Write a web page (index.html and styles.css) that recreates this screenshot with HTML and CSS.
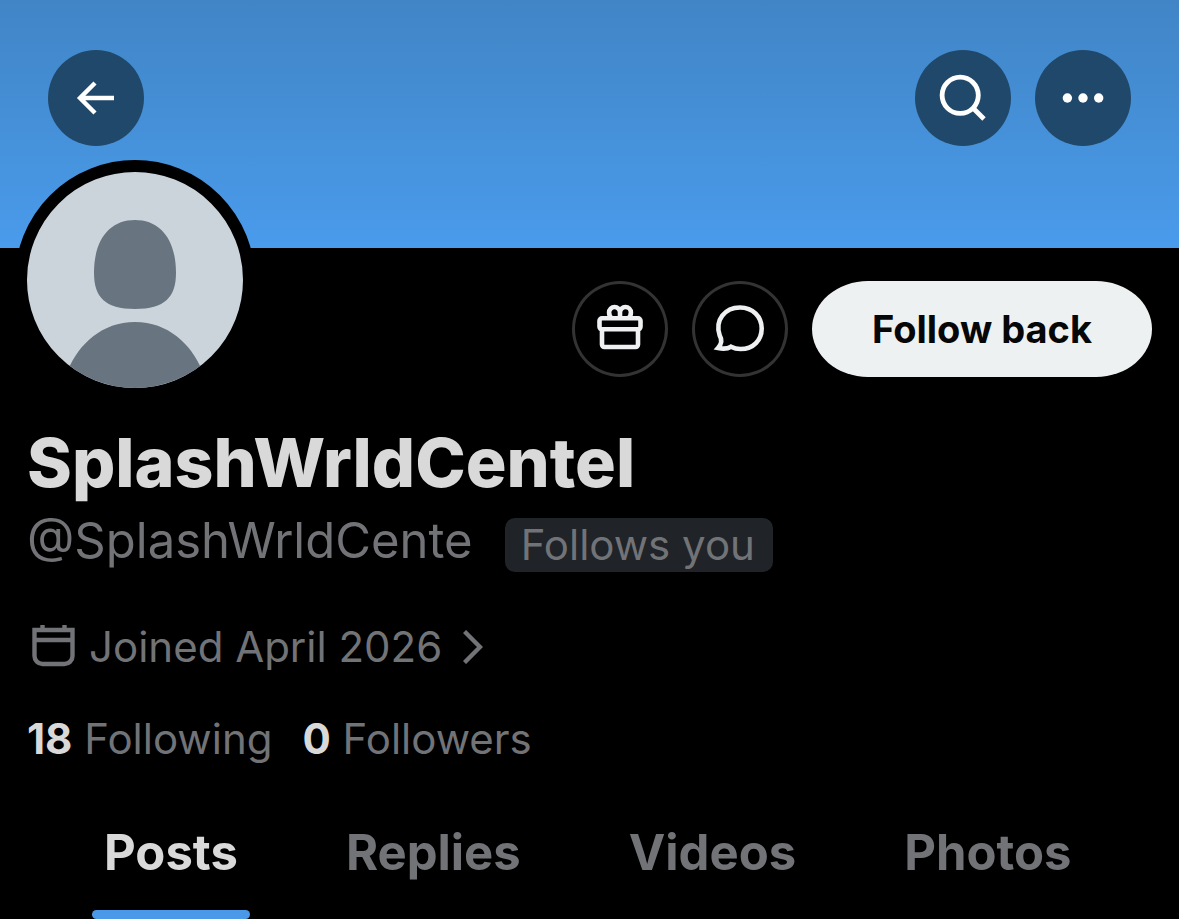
FILE: index.html
```html
<!DOCTYPE html>
<html lang="en">
<head>
<meta charset="utf-8">
<meta name="viewport" content="width=device-width, initial-scale=1">
<title>SplashWrldCentel</title>
<link rel="stylesheet" href="styles.css">
</head>
<body>
<header class="banner">
  <button class="round-btn" type="button" aria-label="Back">
    <svg viewBox="0 0 96 96" aria-hidden="true"><path d="M66 48H32M47 33 32 48l15 15" fill="none" stroke="currentColor" stroke-width="4.4"/></svg>
  </button>
  <div class="banner-tools">
    <button class="round-btn" type="button" aria-label="Search">
      <svg viewBox="0 0 96 96" aria-hidden="true"><g fill="none" stroke="currentColor" stroke-width="4.8"><circle cx="45.2" cy="45.3" r="18.1"/><path d="M57.5 57.5 69 69"/></g></svg>
    </button>
    <button class="round-btn" type="button" aria-label="More">
      <svg viewBox="0 0 96 96" aria-hidden="true"><g fill="currentColor"><circle cx="32.4" cy="48" r="4.7"/><circle cx="48" cy="48" r="4.7"/><circle cx="63.7" cy="48" r="4.7"/></g></svg>
    </button>
  </div>
</header>
<main class="profile">
  <div class="top-row">
    <svg class="avatar" viewBox="0 0 216 216" role="img" aria-label="Profile picture">
      <path fill="#687580" d="M108 48C133 48 149 67 149 101C149 125 138 137 108 137S67 125 67 101C67 67 83 48 108 48ZM108 150C141 150 164 172 175 198L160 216H56L41 198C52 172 75 150 108 150Z"/>
    </svg>
    <div class="actions">
      <button class="ring-btn" type="button" aria-label="Gift">
        <svg viewBox="0 0 96 96" aria-hidden="true"><g fill="none" stroke="currentColor" stroke-width="4.6" stroke-linejoin="round"><rect x="27.5" y="37.3" width="41" height="11" rx="2.5"/><path d="M30 48.500V63.500a2.500 2.500 0 0 0 2.500 2.500h31a2.500 2.500 0 0 0 2.500-2.500V48.500M48 31.500a5.400 5.400 0 1 0-10.900 0c0 2.400 1 4.300 2.400 5.500M48 37v-5.500a5.400 5.400 0 1 1 10.900 0c0 2.400-1 4.300-2.400 5.500"/></g></svg>
      </button>
      <button class="ring-btn" type="button" aria-label="Message">
        <svg viewBox="0 0 96 96" aria-hidden="true"><path d="M48 26.500C61 26.500 69.700 36 69.700 47.500S61.500 68 48.500 68C45 68 41.500 67 39 65.700C36 67.600 31 68 26 67C30.500 62 29.500 57.500 27.700 54.500C22.500 39 33 26.500 48 26.500Z" fill="none" stroke="currentColor" stroke-width="4.6"/></svg>
      </button>
      <button class="follow" type="button">Follow back</button>
    </div>
  </div>
  <h1 class="name">SplashWrldCentel</h1>
  <div class="handle-row">
    <span class="handle">@SplashWrldCente</span>
    <span class="badge">Follows you</span>
  </div>
  <a class="joined" href="#about">
    <svg class="calendar" viewBox="0 0 44 44" aria-hidden="true"><path d="M2.500 5H40.500V31a8 8 0 0 1-8 8H10.500a8 8 0 0 1-8-8ZM2.500 15H40.500M10.500 0v5M32.500 0v5" fill="none" stroke="currentColor" stroke-width="4.4"/></svg>
    <span>Joined April 2026</span>
    <svg class="chevron" viewBox="0 0 20 34" aria-hidden="true"><path d="M1.500 1.500 17 17 1.500 32.500" fill="none" stroke="currentColor" stroke-width="4.4"/></svg>
  </a>
  <div class="counts">
    <a href="#following"><strong>18</strong> Following</a>
    <a href="#followers"><strong>0</strong> Followers</a>
  </div>
</main>
<nav class="tabs" aria-label="Profile sections">
  <a class="tab active" href="#posts" aria-current="page">Posts</a>
  <a class="tab" href="#replies">Replies</a>
  <a class="tab" href="#videos">Videos</a>
  <a class="tab" href="#photos">Photos</a>
</nav>
</body>
</html>
```
FILE: styles.css
```css
* { box-sizing: border-box; }

body {
  margin: 0;
  background: #000;
  color: #717377;
  font-family: Inter, "Liberation Sans", sans-serif;
  font-size: 42px;
  line-height: 56px;
}

a { color: inherit; text-decoration: none; }

button {
  margin: 0;
  padding: 0;
  border: 0;
  font: inherit;
  cursor: pointer;
}

.banner {
  display: flex;
  justify-content: space-between;
  height: 248px;
  padding: 50px 48px 0;
  background: linear-gradient(#4185c6, #4590d8 50%, #4a9bec);
}

.banner-tools { display: flex; gap: 24px; }

.round-btn {
  width: 96px;
  height: 96px;
  border-radius: 50%;
  background: #20486a;
  color: #fff;
}

.round-btn svg,
.ring-btn svg { display: block; width: 96px; height: 96px; }

.profile { padding: 0 27px; }

.top-row {
  display: flex;
  justify-content: space-between;
  align-items: flex-start;
}

.avatar {
  box-sizing: content-box;
  width: 216px;
  height: 216px;
  margin: -88px 0 0 -12px;
  border: 12px solid #000;
  border-radius: 50%;
  background: #ccd4db;
}

.actions { display: flex; gap: 24px; margin-top: 33px; }

.ring-btn {
  width: 96px;
  height: 96px;
  border-radius: 50%;
  background: #000;
  box-shadow: inset 0 0 0 3px #333;
  color: #eef0f1;
}

.follow {
  height: 96px;
  padding: 0 60px;
  border-radius: 56px / 48px;
  background: #eef1f2;
  color: #050708;
  font-size: 38px;
  font-weight: 700;
}

.name {
  margin: 20px 0 0;
  color: #d9d9d9;
  font-size: 68px;
  font-weight: 800;
  line-height: 84px;
}

.handle-row {
  display: flex;
  align-items: flex-start;
  gap: 32px;
  margin-top: 7px;
}

.handle { font-size: 49px; line-height: 60px; }

.badge {
  margin-top: 7px;
  padding: 0 18px 0 16px;
  border-radius: 10px;
  background: #202327;
  line-height: 54px;
}

.joined {
  display: flex;
  align-items: center;
  width: fit-content;
  margin-top: 47px;
}

.calendar { width: 44px; height: 44px; margin: 0 13px 0 5px; }

.chevron { width: 20px; height: 34px; margin-left: 21px; }

.counts { display: flex; gap: 30px; margin-top: 36px; }

.counts strong { color: #d9d9d9; font-weight: 700; }

.tabs {
  display: flex;
  gap: 108px;
  margin-top: 56px;
  padding: 0 0 0 104px;
  overflow: hidden;
  font-size: 49px;
  font-weight: 700;
  line-height: 60px;
}

.tab { position: relative; padding-bottom: 36px; }

.active { color: #d9d9d9; }

.active::after {
  content: "";
  position: absolute;
  right: -12px;
  bottom: 0;
  left: -12px;
  height: 9px;
  border-radius: 5px;
  background: #4a99e9;
}
```
